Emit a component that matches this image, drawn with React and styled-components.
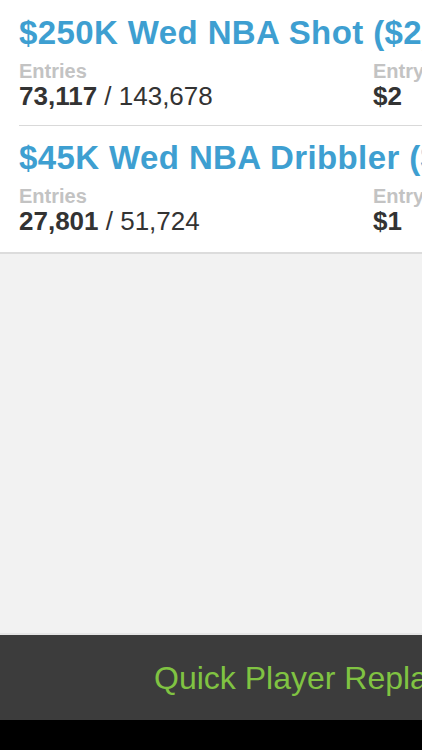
import React from "react";
import styled, { createGlobalStyle } from "styled-components";

const Global = createGlobalStyle`
  html, body { margin: 0; padding: 0; background: #000; }
  body { font-family: "Liberation Sans", Arial, sans-serif; }
`;

const Screen = styled.div`
  width: 422px;
  height: 750px;
  overflow: hidden;
  display: flex;
  flex-direction: column;
  background: #f2f2f2;
`;

const List = styled.div`
  background: #fff;
  display: flex;
  flex-direction: column;
`;

const Row = styled.div`
  height: ${(p) => (p.$last ? "128px" : "126px")};
  box-sizing: border-box;
  padding-top: ${(p) => (p.$last ? "11px" : "12px")};
  margin-left: ${(p) => (p.$last ? "0" : "19px")};
  padding-left: ${(p) => (p.$last ? "19px" : "0")};
  border-bottom: ${(p) => (p.$last ? "2px solid #dcdcdc" : "1px solid #d9d9d9")};
`;

const Title = styled.div`
  font-family: "Liberation Sans", Arial, sans-serif;
  font-weight: 700;
  font-size: 33px;
  letter-spacing: 0.4px;
  line-height: 42px;
  color: #3e9fd1;
  white-space: nowrap;
`;

const Stats = styled.div`
  display: grid;
  grid-template-columns: 354px auto;
  margin-top: 6px;
`;

const Stat = styled.div`
  display: flex;
  flex-direction: column;
  white-space: nowrap;
`;

const Label = styled.div`
  font-weight: 700;
  font-size: 20px;
  line-height: 22px;
  color: #c3c3c3;
`;

const Value = styled.div`
  font-size: 26px;
  line-height: 28px;
  color: #333;
  b { font-weight: 700; }
`;

const Filler = styled.div`
  flex: 1;
  border-bottom: 2px solid #e6e6e6;
`;

const Bar = styled.div`
  height: 85px;
  background: #3c3c3c;
  display: flex;
  align-items: center;
  padding-left: 154px;
  box-sizing: border-box;
`;

const BarText = styled.div`
  font-size: 32px;
  color: #80c342;
  white-space: nowrap;
  padding-top: 2px;
`;

const Bottom = styled.div`
  height: 30px;
  background: #000;
`;

const contests = [
  { title: "$250K Wed NBA Shot ($2)", entries: "73,117", max: "143,678", fee: "$2" },
  { title: "$45K Wed NBA Dribbler ($1)", entries: "27,801", max: "51,724", fee: "$1" },
];

export default function App() {
  return (
    <>
      <Global />
      <Screen>
        <List>
          {contests.map((c, i) => (
            <Row key={c.title} $last={i === contests.length - 1}>
              <Title>{c.title}</Title>
              <Stats>
                <Stat>
                  <Label>Entries</Label>
                  <Value>
                    <b>{c.entries}</b> / {c.max}
                  </Value>
                </Stat>
                <Stat>
                  <Label>Entry Fee</Label>
                  <Value>
                    <b>{c.fee}</b>
                  </Value>
                </Stat>
              </Stats>
            </Row>
          ))}
        </List>
        <Filler />
        <Bar>
          <BarText>Quick Player Replacement</BarText>
        </Bar>
        <Bottom />
      </Screen>
    </>
  );
}
